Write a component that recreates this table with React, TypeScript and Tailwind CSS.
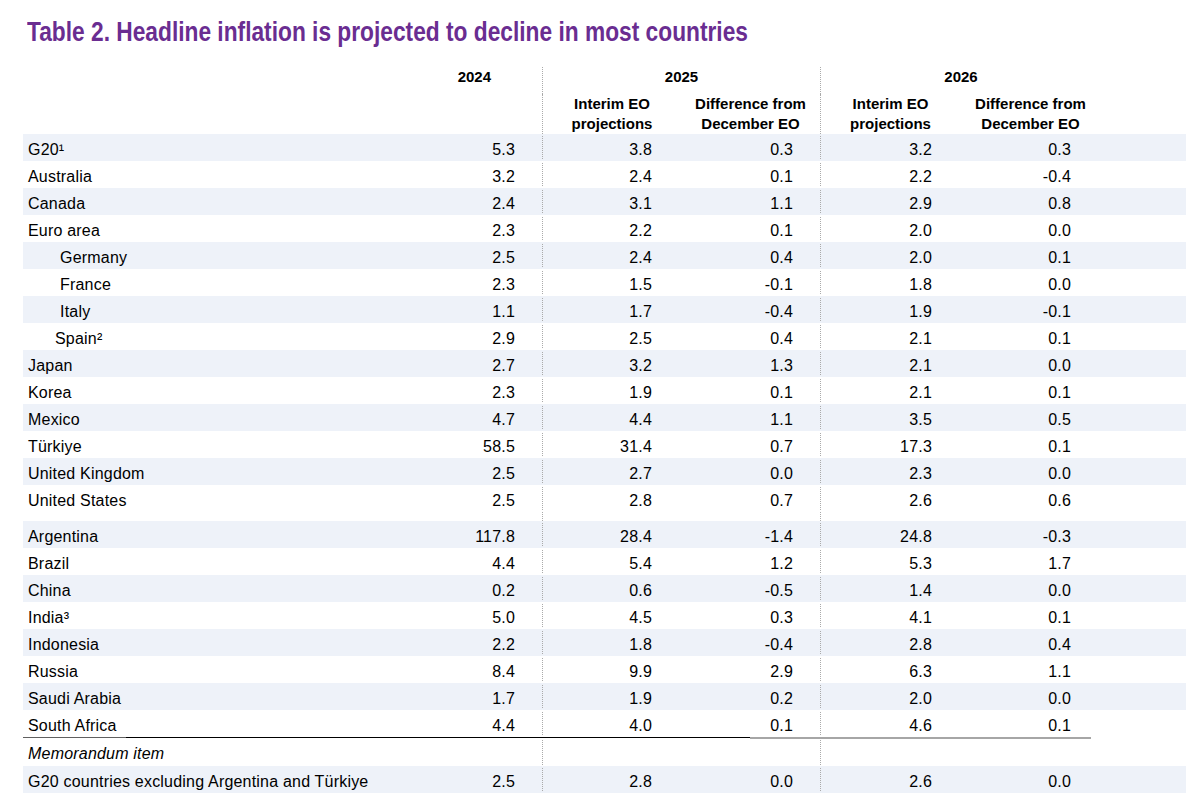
import React from "react";

type RowData = {
  label: string;
  indent?: string;
  vals: string[];
  band?: boolean;
  italic?: boolean;
};

const grid = "grid grid-cols-[402px_117px_139px_139px_140px_141px]";

const main: RowData[] = [
  { label: "G20¹", vals: ["5.3", "3.8", "0.3", "3.2", "0.3"], band: true },
  { label: "Australia", vals: ["3.2", "2.4", "0.1", "2.2", "-0.4"] },
  { label: "Canada", vals: ["2.4", "3.1", "1.1", "2.9", "0.8"], band: true },
  { label: "Euro area", vals: ["2.3", "2.2", "0.1", "2.0", "0.0"] },
  { label: "Germany", indent: "pl-[37px]", vals: ["2.5", "2.4", "0.4", "2.0", "0.1"], band: true },
  { label: "France", indent: "pl-[37px]", vals: ["2.3", "1.5", "-0.1", "1.8", "0.0"] },
  { label: "Italy", indent: "pl-[37px]", vals: ["1.1", "1.7", "-0.4", "1.9", "-0.1"], band: true },
  { label: "Spain²", indent: "pl-[32px]", vals: ["2.9", "2.5", "0.4", "2.1", "0.1"] },
  { label: "Japan", vals: ["2.7", "3.2", "1.3", "2.1", "0.0"], band: true },
  { label: "Korea", vals: ["2.3", "1.9", "0.1", "2.1", "0.1"] },
  { label: "Mexico", vals: ["4.7", "4.4", "1.1", "3.5", "0.5"], band: true },
  { label: "Türkiye", vals: ["58.5", "31.4", "0.7", "17.3", "0.1"] },
  { label: "United Kingdom", vals: ["2.5", "2.7", "0.0", "2.3", "0.0"], band: true },
  { label: "United States", vals: ["2.5", "2.8", "0.7", "2.6", "0.6"] },
];

const others: RowData[] = [
  { label: "Argentina", vals: ["117.8", "28.4", "-1.4", "24.8", "-0.3"], band: true },
  { label: "Brazil", vals: ["4.4", "5.4", "1.2", "5.3", "1.7"] },
  { label: "China", vals: ["0.2", "0.6", "-0.5", "1.4", "0.0"], band: true },
  { label: "India³", vals: ["5.0", "4.5", "0.3", "4.1", "0.1"] },
  { label: "Indonesia", vals: ["2.2", "1.8", "-0.4", "2.8", "0.4"], band: true },
  { label: "Russia", vals: ["8.4", "9.9", "2.9", "6.3", "1.1"] },
  { label: "Saudi Arabia", vals: ["1.7", "1.9", "0.2", "2.0", "0.0"], band: true },
  { label: "South Africa", vals: ["4.4", "4.0", "0.1", "4.6", "0.1"] },
];

const line = "border-l border-dotted border-[#aaaaaa]";

const Row: React.FC<{ row: RowData }> = ({ row }) => {
  const v = row.vals;
  return (
    <div className={`${grid} h-[27px] items-center pt-[4px] text-[16px] tracking-[0.2px] ${row.band ? "bg-[#eef2f9]" : "bg-white"}`}>
      <div className={`${row.indent ?? "pl-[5px]"} ${row.italic ? "italic" : ""} whitespace-nowrap`}>{row.label}</div>
      <div className="text-right pr-[27px]">{v[0]}</div>
      <div className={`text-right pr-[29px] h-full flex items-center justify-end -mt-[4px] pt-[4px] ${line}`}>{v[1]}</div>
      <div className="text-right pr-[27px]">{v[2]}</div>
      <div className={`text-right pr-[28px] h-full flex items-center justify-end -mt-[4px] pt-[4px] ${line}`}>{v[3]}</div>
      <div className="text-right pr-[30px]">{v[4]}</div>
    </div>
  );
};

const Spacer: React.FC<{ h: string }> = ({ h }) => (
  <div className={`${grid} ${h}`}>
    <div />
    <div />
    <div className={line} />
    <div />
    <div className={line} />
    <div />
  </div>
);

export default function App() {
  return (
    <div className="w-[1186px] h-[793px] overflow-hidden bg-white text-black font-['Liberation_Sans',Arial,sans-serif] text-[15px] leading-[20px]">
      <div className="pl-[27px] pt-[15px] h-[67px]">
        <h1 className="inline-block origin-left scale-x-[0.812] whitespace-nowrap text-[28px] leading-[34px] font-bold text-[#6a2d91] font-['Liberation_Sans',Arial,sans-serif]">
          Table 2. Headline inflation is projected to decline in most countries
        </h1>
      </div>
      <div className="pl-[23px]">
        <div className={`${grid} h-[27px] font-bold`}>
          <div />
          <div className="text-right pr-[51px]">2024</div>
          <div className={`col-span-2 ${line} text-center`}>2025</div>
          <div className={`col-span-2 ${line} text-center`}>2026</div>
        </div>
        <div className={`${grid} h-[40px] font-bold text-center`}>
          <div />
          <div />
          <div className={line}>Interim EO<br />projections</div>
          <div>Difference from<br />December EO</div>
          <div className={line}>Interim EO<br />projections</div>
          <div>Difference from<br />December EO</div>
        </div>
        {main.map((r) => (
          <Row key={r.label} row={r} />
        ))}
        <Spacer h="h-[9px]" />
        {others.map((r) => (
          <Row key={r.label} row={r} />
        ))}
        <div className="flex w-[1068px]">
          <div className="w-[103px] h-[1px] bg-[#606060]" />
          <div className="w-[624px] h-[1px] bg-black" />
          <div className="flex-1 h-[2px] bg-[#a6a6a6]" />
        </div>
        <div className={`${grid} h-[27px] items-center pt-[2px] text-[16px] tracking-[0.2px]`}>
          <div className="pl-[5px] italic">Memorandum item</div>
          <div />
          <div className={`${line} h-full -mt-[2px]`} />
          <div />
          <div className={`${line} h-full -mt-[2px]`} />
          <div />
        </div>
        <Row row={{ label: "G20 countries excluding Argentina and Türkiye", vals: ["2.5", "2.8", "0.0", "2.6", "0.0"], band: true }} />
      </div>
    </div>
  );
}
